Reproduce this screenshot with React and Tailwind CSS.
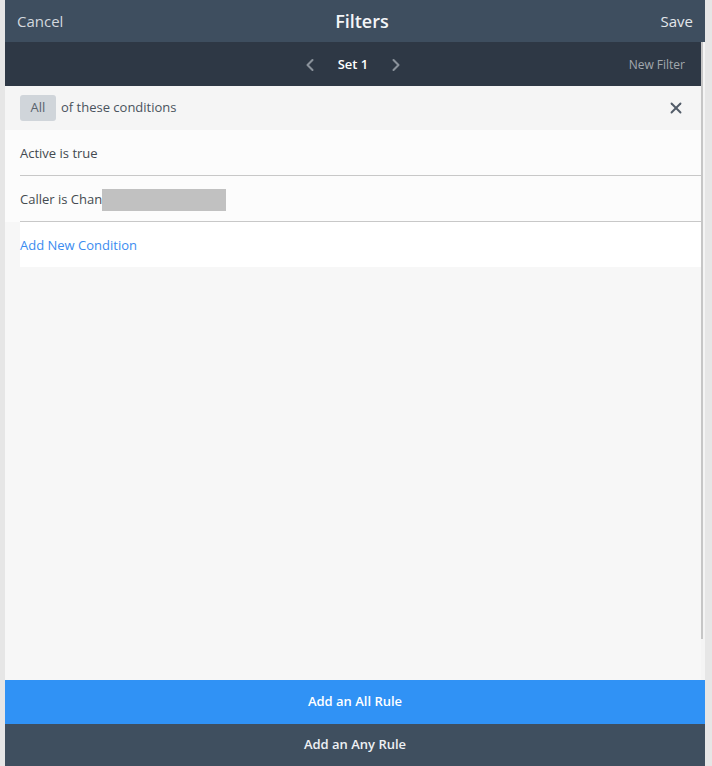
import { ChevronLeft, ChevronRight, X } from "lucide-react";

function ConditionRow({ children }) {
    return (
        <div className="bg-[#fcfcfc] pl-[15px]">
            <div className="h-[46px] flex items-center pt-[3px] border-b border-[#c8c8c8] text-[13px] text-[#444a50]">
                {children}
            </div>
        </div>
    );
}

export default function App() {
    return (
        <div
            className="h-[766px] bg-[#e6e6e6] pl-[5px] pr-[7px] overflow-hidden"
            style={{ fontFamily: '"Open Sans", "Noto Sans", sans-serif' }}
        >
            <div className="h-full flex flex-col bg-[#f7f7f7]">
                {/* Top bar */}
                <div className="h-[42px] shrink-0 bg-[#3e4e5f] flex items-center justify-between px-[12px]">
                    <button className="text-[15px] text-[#d3d8de]">Cancel</button>
                    <h1 className="text-[18px] font-semibold text-[#f4f6f8]">Filters</h1>
                    <button className="text-[15px] text-[#e3e7eb]">Save</button>
                </div>

                {/* Scrolling area */}
                <div className="flex-1 flex min-h-0">
                    <div className="flex-1 flex flex-col">
                        {/* Set navigation */}
                        <div className="h-[44px] bg-[#2e3845] flex items-center relative">
                            <div className="flex-1 flex items-center justify-center gap-[18px] pt-[2px]">
                                <ChevronLeft size={20} strokeWidth={2.5} className="text-[#8a929b]" />
                                <span className="text-[13px] font-semibold text-white">Set 1</span>
                                <ChevronRight size={20} strokeWidth={2.5} className="text-[#8a929b]" />
                            </div>
                            <span className="absolute right-[16px] pt-[2px] text-[12px] text-[#a2a8ae]">New Filter</span>
                        </div>

                        {/* Group header */}
                        <div className="h-[44px] bg-[#f5f5f5] flex items-center pl-[15px] pr-[16px]">
                            <span className="bg-[#d0d5da] text-[#58626d] text-[13px] rounded-[3px] w-[36px] justify-center h-[26px] flex items-center">
                                All
                            </span>
                            <span className="ml-[5px] text-[13px] text-[#4a535d]">of these conditions</span>
                            <X size={18} strokeWidth={2.5} className="ml-auto text-[#525c68]" />
                        </div>

                        <ConditionRow>Active is true</ConditionRow>
                        <ConditionRow>
                            Caller is Chan
                            <span className="inline-block w-[124px] h-[22px] bg-[#c1c1c1]" />
                        </ConditionRow>
                        <div className="pl-[15px]">
                            <div className="h-[45px] bg-white flex items-center pt-[3px] text-[13px] text-[#3b8cf0]">
                                Add New Condition
                            </div>
                        </div>
                    </div>

                    {/* Scrollbar */}
                    <div className="w-[4px] bg-[#f4f4f4]">
                        <div className="w-[2px] h-[597px] bg-[#c6c6c6]" />
                    </div>
                </div>

                {/* Bottom actions */}
                <button className="h-[44px] shrink-0 bg-[#3092f5] text-white text-[13px] font-semibold">
                    Add an All Rule
                </button>
                <button className="h-[42px] shrink-0 bg-[#3f4f5f] text-[#eef1f4] text-[13px] font-semibold">
                    Add an Any Rule
                </button>
            </div>
        </div>
    );
}
